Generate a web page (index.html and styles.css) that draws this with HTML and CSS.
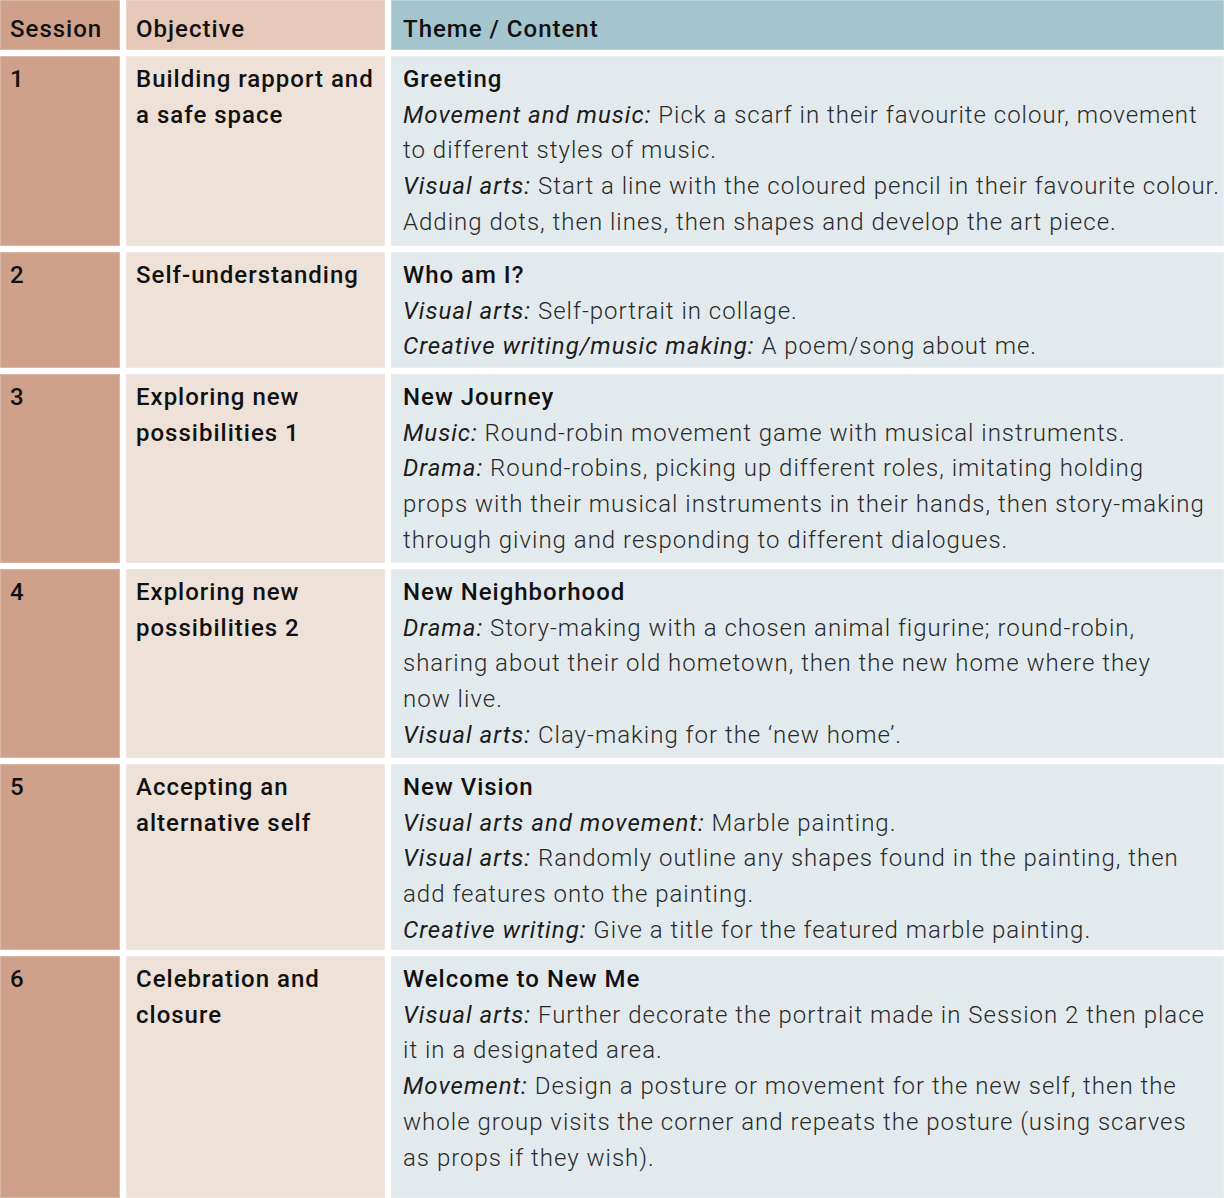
FILE: index.html
```html
<!DOCTYPE html>
<html lang="en">
<head>
<meta charset="utf-8">
<title>Sessions</title>
<link rel="stylesheet" href="styles.css">
</head>
<body>
<div class="table">
  <div class="cell c1 head">Session</div>
  <div class="cell c2 head">Objective</div>
  <div class="cell c3 head">Theme / Content</div>

  <div class="cell c1 num">1</div>
  <div class="cell c2 obj">Building rapport and<br>a safe space</div>
  <div class="cell c3 body">
    <div class="title">Greeting</div>
    <div><em>Movement and music:</em> Pick a scarf in their favourite colour, movement<br>to different styles of music.</div>
    <div><em>Visual arts:</em> Start a line with the coloured pencil in their favourite colour.<br>Adding dots, then lines, then shapes and develop the art piece.</div>
  </div>

  <div class="cell c1 num">2</div>
  <div class="cell c2 obj">Self-understanding</div>
  <div class="cell c3 body">
    <div class="title">Who am I?</div>
    <div><em>Visual arts:</em> Self-portrait in collage.</div>
    <div><em>Creative writing/music making:</em> A poem/song about me.</div>
  </div>

  <div class="cell c1 num">3</div>
  <div class="cell c2 obj">Exploring new<br>possibilities 1</div>
  <div class="cell c3 body">
    <div class="title">New Journey</div>
    <div><em>Music:</em> Round-robin movement game with musical instruments.</div>
    <div><em>Drama:</em> Round-robins, picking up different roles, imitating holding<br>props with their musical instruments in their hands, then story-making<br>through giving and responding to different dialogues.</div>
  </div>

  <div class="cell c1 num">4</div>
  <div class="cell c2 obj">Exploring new<br>possibilities 2</div>
  <div class="cell c3 body">
    <div class="title">New Neighborhood</div>
    <div><em>Drama:</em> Story-making with a chosen animal figurine; round-robin,<br>sharing about their old hometown, then the new home where they<br>now live.</div>
    <div><em>Visual arts:</em> Clay-making for the ‘new home’.</div>
  </div>

  <div class="cell c1 num">5</div>
  <div class="cell c2 obj">Accepting an<br>alternative self</div>
  <div class="cell c3 body">
    <div class="title">New Vision</div>
    <div><em>Visual arts and movement:</em> Marble painting.</div>
    <div><em>Visual arts:</em> Randomly outline any shapes found in the painting, then<br>add features onto the painting.</div>
    <div><em>Creative writing:</em> Give a title for the featured marble painting.</div>
  </div>

  <div class="cell c1 num">6</div>
  <div class="cell c2 obj">Celebration and<br>closure</div>
  <div class="cell c3 body">
    <div class="title">Welcome to New Me</div>
    <div><em>Visual arts:</em> Further decorate the portrait made in Session 2 then place<br>it in a designated area.</div>
    <div><em>Movement:</em> Design a posture or movement for the new self, then the<br>whole group visits the corner and repeats the posture (using scarves<br>as props if they wish).</div>
  </div>
</div>
</body>
</html>
```

FILE: styles.css
```css
html, body {
  margin: 0;
  padding: 0;
  background: #ffffff;
}

body {
  font-family: Roboto, "Liberation Sans", sans-serif;
  font-size: 24px;
  letter-spacing: 1px;
  color: #1c1c1c;
}

.table {
  display: grid;
  width: 1224px;
  grid-template-columns: 120px 259px 833px;
  grid-template-rows: 50px 190px 116px 189px 189px 186px 242px;
  column-gap: 6px;
  row-gap: 6px;
}

.cell {
  box-sizing: border-box;
  line-height: 35.7px;
  padding: 5px 0 4px 9px;
  border: 1px solid rgba(255, 255, 255, 0.22);
  white-space: nowrap;
}

.head {
  font-weight: 500;
  padding-top: 11px;
  color: #111111;
}

.c1 {
  background: #cfa18b;
}

.c2 {
  background: #eee1d8;
}

.c2.head {
  background: #e5c8b8;
}

.c3 {
  background: #e3eaee;
  padding-left: 11px;
}

.c3.head {
  background: #a4c5ce;
}

.num,
.obj {
  font-weight: 500;
  color: #111111;
}

.body {
  font-weight: 300;
  color: #2a2a2a;
}

.body em {
  font-style: italic;
  font-weight: 400;
  color: #1c1c1c;
}

.title {
  font-weight: 500;
  color: #111111;
}
```
